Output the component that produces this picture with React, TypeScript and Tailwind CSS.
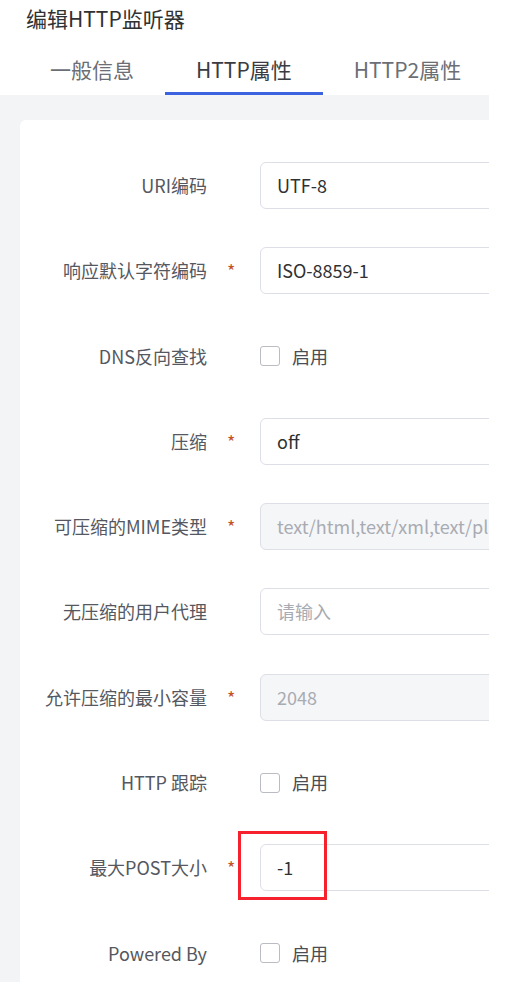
import { ReactNode } from 'react';

type Field = {
  label: string;
  required?: boolean;
  kind: 'input' | 'check';
  value?: string;
  placeholder?: string;
  disabled?: boolean;
  marked?: boolean;
};

const fields: Field[] = [
  { label: 'URI编码', kind: 'input', value: 'UTF-8' },
  { label: '响应默认字符编码', required: true, kind: 'input', value: 'ISO-8859-1' },
  { label: 'DNS反向查找', kind: 'check' },
  { label: '压缩', required: true, kind: 'input', value: 'off' },
  { label: '可压缩的MIME类型', required: true, kind: 'input', value: 'text/html,text/xml,text/plain,text/css', disabled: true },
  { label: '无压缩的用户代理', kind: 'input', placeholder: '请输入' },
  { label: '允许压缩的最小容量', required: true, kind: 'input', value: '2048', disabled: true },
  { label: 'HTTP 跟踪', kind: 'check' },
  { label: '最大POST大小', required: true, kind: 'input', value: '-1', marked: true },
  { label: 'Powered By', kind: 'check' },
];

const tabs = ['一般信息', 'HTTP属性', 'HTTP2属性'];

function Control({ field }: { field: Field }): ReactNode {
  if (field.kind === 'check') {
    return (
      <div className="flex items-center gap-3">
        <span className="w-[20px] h-[20px] rounded-[3px] border-[1.5px] border-[#b9bcc2] bg-white" />
        <span className="text-[18px] text-[#4a4d55]">启用</span>
      </div>
    );
  }
  return (
    <div className="relative w-full">
      <div
        className={`h-[47px] w-full flex items-center pl-4 rounded-[6px] border border-[#dcdfe6] text-[18px] whitespace-nowrap overflow-hidden ${
          field.disabled ? 'bg-[#f5f6f8] text-[#a8abb2]' : 'bg-white text-[#303133]'
        }`}
      >
        {field.value ?? <span className="text-[#a8abb2]">{field.placeholder}</span>}
      </div>
      {field.marked && (
        <div className="absolute left-[-22px] top-[-13px] w-[89px] h-[69px] border-[3px] border-[#f5222d]" />
      )}
    </div>
  );
}

export default function App() {
  return (
    <div
      className="w-[509px] h-[982px] bg-white overflow-hidden"
      style={{ fontFamily: "'Noto Sans CJK SC', 'Noto Sans', sans-serif" }}
    >
      <div className="w-[489px] h-full flex flex-col overflow-hidden">
        <div className="pl-[26px] pt-[4px] leading-[28px] text-[21px] text-[#303133]">编辑HTTP监听器</div>

        <div className="flex mt-[16px] pl-[19px] bg-white">
          {tabs.map((t, i) => (
            <div
              key={t}
              className={`h-[47px] px-[31px] shrink-0 whitespace-nowrap flex items-center text-[21px] border-b-[3px] ${
                i === 1 ? 'border-[#3b63e0] text-[#3a3c42]' : 'border-transparent text-[#6b6e75]'
              }`}
            >
              {t}
            </div>
          ))}
        </div>

        <div className="flex-1 bg-[#f3f4f6] pt-[25px] pl-[20px]">
          <div className="w-[600px] h-[900px] bg-white rounded-tl-[6px] pt-[42px] flex flex-col gap-[38.3px]">
            {fields.map((f) => (
              <div key={f.label} className="h-[47px] flex items-center">
                <div className="w-[187px] shrink-0 text-right text-[18px] text-[#555860] whitespace-nowrap">
                  {f.label}
                </div>
                <div className="w-[53px] shrink-0 pl-[20px] text-[18px] text-[#c4531f]">
                  {f.required ? '*' : ''}
                </div>
                <div className="flex-1">
                  <Control field={f} />
                </div>
              </div>
            ))}
          </div>
        </div>
      </div>
    </div>
  );
}
